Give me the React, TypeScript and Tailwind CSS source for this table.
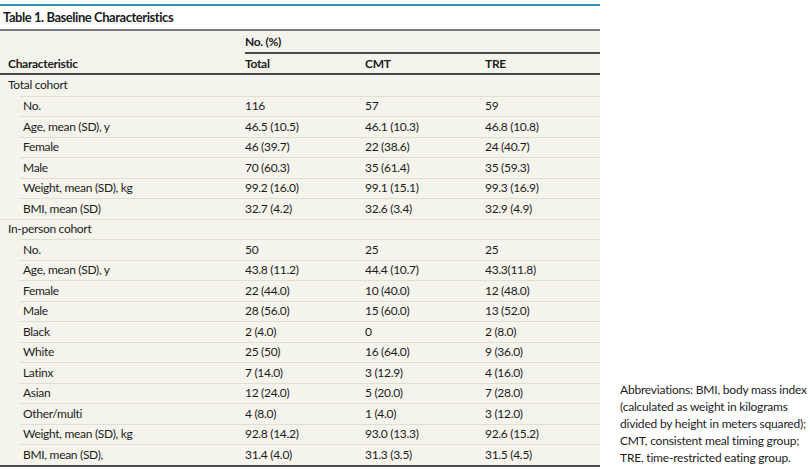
import React from "react";

type Row = { label: string; total: string; cmt: string; tre: string };

const TOTAL_COHORT: Row[] = [
  { label: "No.", total: "116", cmt: "57", tre: "59" },
  { label: "Age, mean (SD), y", total: "46.5 (10.5)", cmt: "46.1 (10.3)", tre: "46.8 (10.8)" },
  { label: "Female", total: "46 (39.7)", cmt: "22 (38.6)", tre: "24 (40.7)" },
  { label: "Male", total: "70 (60.3)", cmt: "35 (61.4)", tre: "35 (59.3)" },
  { label: "Weight, mean (SD), kg", total: "99.2 (16.0)", cmt: "99.1 (15.1)", tre: "99.3 (16.9)" },
  { label: "BMI, mean (SD)", total: "32.7 (4.2)", cmt: "32.6 (3.4)", tre: "32.9 (4.9)" },
];

const IN_PERSON: Row[] = [
  { label: "No.", total: "50", cmt: "25", tre: "25" },
  { label: "Age, mean (SD), y", total: "43.8 (11.2)", cmt: "44.4 (10.7)", tre: "43.3(11.8)" },
  { label: "Female", total: "22 (44.0)", cmt: "10 (40.0)", tre: "12 (48.0)" },
  { label: "Male", total: "28 (56.0)", cmt: "15 (60.0)", tre: "13 (52.0)" },
  { label: "Black", total: "2 (4.0)", cmt: "0", tre: "2 (8.0)" },
  { label: "White", total: "25 (50)", cmt: "16 (64.0)", tre: "9 (36.0)" },
  { label: "Latinx", total: "7 (14.0)", cmt: "3 (12.9)", tre: "4 (16.0)" },
  { label: "Asian", total: "12 (24.0)", cmt: "5 (20.0)", tre: "7 (28.0)" },
  { label: "Other/multi", total: "4 (8.0)", cmt: "1 (4.0)", tre: "3 (12.0)" },
  { label: "Weight, mean (SD), kg", total: "92.8 (14.2)", cmt: "93.0 (13.3)", tre: "92.6 (15.2)" },
  { label: "BMI, mean (SD),", total: "31.4 (4.0)", cmt: "31.3 (3.5)", tre: "31.5 (4.5)" },
];

export default function App() {
  return (
    <div className="w-[810px] h-[470px] bg-white flex text-[#1c1c1c] font-['Lato','Open_Sans',sans-serif] text-[12px] tracking-[-0.3px]">
      <div className="w-[600px] flex flex-col pt-[4px]">
        <div className="h-[2px] bg-[#2f93b8]" />
        <div className="h-[23px] flex items-center pl-[3px] text-[13px] font-bold tracking-[-0.45px]">
          Table 1. Baseline Characteristics
        </div>
        <div className="bg-[#f4f3ec] border-t-2 border-[#7a7a7a] flex flex-col">
          <div className="flex h-[23px]">
            <div className="w-[245px]" />
            <div className="flex-1 flex items-center font-bold border-b-2 border-[#4a4a4a]">
              No. (%)
            </div>
          </div>
          <div className="flex h-[21px] items-center font-bold border-b-2 border-[#4a4a4a]">
            <div className="w-[245px] pl-[8px]">Characteristic</div>
            <div className="w-[120px]">Total</div>
            <div className="w-[120px]">CMT</div>
            <div className="flex-1">TRE</div>
          </div>
          <Group title="Total cohort" rows={TOTAL_COHORT} first />
          <Group title="In-person cohort" rows={IN_PERSON} />
          <div className="h-[2px] bg-[#4a4a4a]" />
        </div>
      </div>
      <div className="flex-1 flex items-end pl-[20px] pb-[4px]">
        <p className="leading-[17px] text-[12px] tracking-[-0.2px]">
          Abbreviations: BMI, body mass index (calculated as weight in kilograms divided by height in
          meters squared); CMT, consistent meal timing group; TRE, time-restricted eating group.
        </p>
      </div>
    </div>
  );
}

function Group({ title, rows, first }: { title: string; rows: Row[]; first?: boolean }) {
  return (
    <>
      <div
        className={
          "h-[20.5px] flex items-center pl-[8px] " + (first ? "" : "border-t border-[#e1dfd2]")
        }
      >
        {title}
      </div>
      {rows.map((r) => (
        <div
          key={title + r.label}
          className="ml-[20px] h-[20.5px] flex items-center border-t border-[#e1dfd2]"
        >
          <div className="w-[225px] pl-[3px]">{r.label}</div>
          <div className="w-[120px]">{r.total}</div>
          <div className="w-[120px]">{r.cmt}</div>
          <div className="flex-1">{r.tre}</div>
        </div>
      ))}
    </>
  );
}
